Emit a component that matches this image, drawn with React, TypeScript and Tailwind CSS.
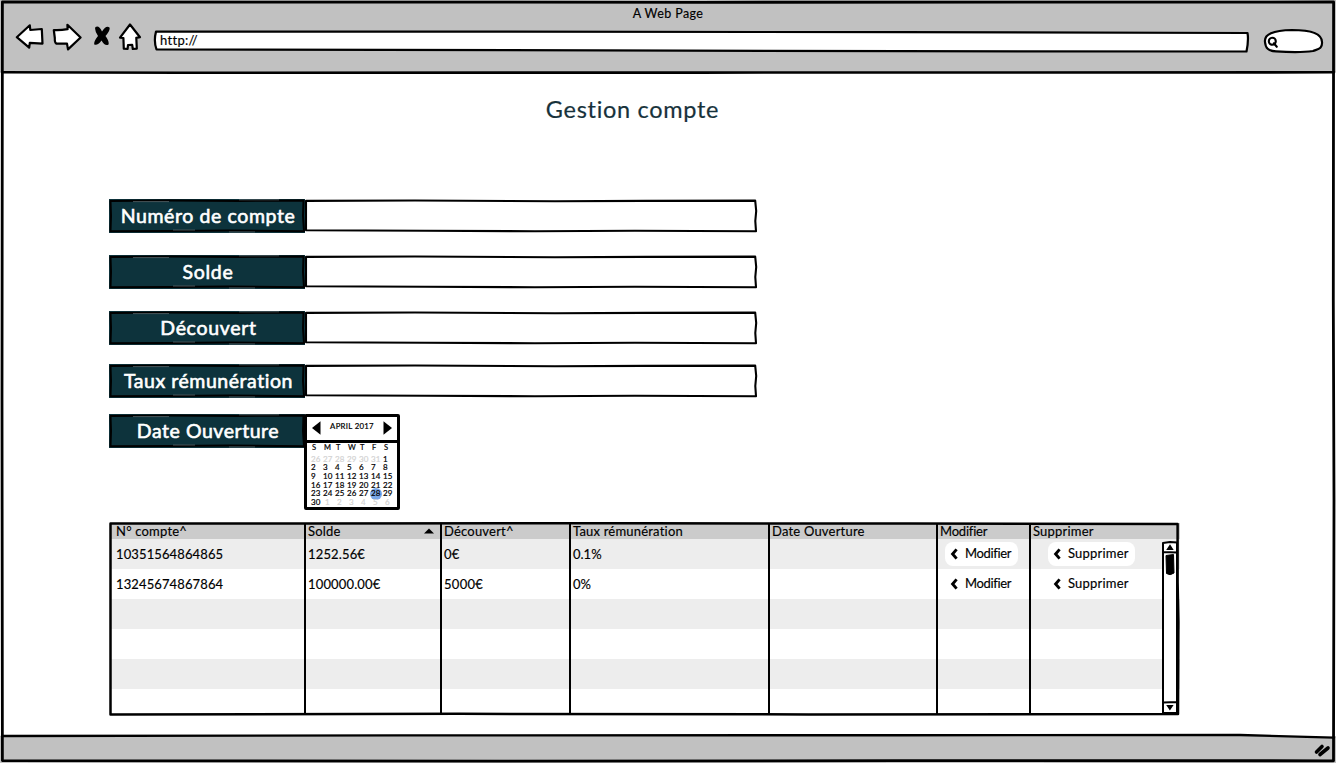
import type { ReactNode } from 'react';

const FIELDS = [
  { label: 'Numéro de compte', box: 'mb-[22px]', tracking: 'tracking-[0.6px]', nudge: 'pl-[2px]' },
  { label: 'Solde', box: 'mb-[22px]', tracking: 'tracking-[0.7px]', nudge: 'pl-[2px]' },
  { label: 'Découvert', box: 'mb-[19px]', tracking: 'tracking-[0.7px]', nudge: 'pl-[3px]' },
  { label: 'Taux rémunération', box: 'mb-[16px]', tracking: 'tracking-[0.55px]', nudge: 'pl-[3px]' },
];

const WEEKS = [
  [26, 27, 28, 29, 30, 31, 1],
  [2, 3, 4, 5, 6, 7, 8],
  [9, 10, 11, 12, 13, 14, 15],
  [16, 17, 18, 19, 20, 21, 22],
  [23, 24, 25, 26, 27, 28, 29],
  [30, 1, 2, 3, 4, 5, 6],
];

const ACCOUNTS = [
  { id: '10351564864865', solde: '1252.56€', decouvert: '0€', taux: '0.1%' },
  { id: '13245674867864', solde: '100000.00€', decouvert: '5000€', taux: '0%' },
];

const COLS = 'grid grid-cols-[195px_136px_129px_199px_168px_93px_148px]';

function Stroke({ d, w, fill = 'none' }: { d: string; w: number; fill?: string }) {
  return <path d={d} fill={fill} stroke="#000" strokeWidth={w} strokeLinejoin="round" strokeLinecap="round" />;
}

function Label({ children, className }: { children: ReactNode; className: string }) {
  return (
    <div className="relative h-[34px] w-[196px] shrink-0 bg-[#0d333c]">
      <svg className="absolute inset-0" width="196" height="34" viewBox="0 0 196 34">
        <Stroke w={2} d="M1.5 2 L60 1.4 L130 1.9 L194.5 1.5 L194 17 L195 32.3 L120 31.6 L60 32 L1.5 32.3 L2 17 Z" />
        <path d="M24 2.6H60M130 .8H170M64 31H86M120 33H146" stroke="#59666a" strokeWidth=".8" />
      </svg>
      <div className={`relative flex h-[34px] items-center justify-center whitespace-nowrap text-[19.5px] leading-none text-white [-webkit-text-stroke:0.6px_white] ${className}`}>
        {children}
      </div>
    </div>
  );
}

function TextBox() {
  return (
    <div className="relative h-[34px] w-[453px]">
      <svg className="absolute inset-0" width="453" height="34" viewBox="0 0 453 34">
        <Stroke w={2.1} d="M1 1.9 L110 1.5 L250 2.2 L340 1.9 L450.2 1.6 L451.2 12 L450.3 22 L451 32.2 L330 31.8 L230 32.2 L120 31.8 L1 31.2 Z" />
      </svg>
    </div>
  );
}

function Calendar() {
  return (
    <div className="relative h-[96px] w-[96px] -ml-px rounded-[2px] border-[3px] border-black bg-white text-[7.5px] leading-none text-black [-webkit-text-stroke:0.2px]">
      <div className="flex h-[26px] items-center justify-between border-b-[3px] border-black pl-[5px] pr-[5px]">
        <svg width="9" height="14" viewBox="0 0 9 14" className="-mt-[2px]"><path d="M0 7 8.5.3v13.4z" /></svg>
        <span className="-mt-[3px] whitespace-nowrap text-[7.8px] tracking-[0.3px]">APRIL 2017</span>
        <svg width="9" height="14" viewBox="0 0 9 14" className="-mt-[2px]"><path d="M9 7 .5.3v13.4z" /></svg>
      </div>
      <div className="grid h-[10px] grid-cols-[repeat(7,12px)] pl-[5px] pt-[1px]">
        {['S', 'M', 'T', 'W', 'T', 'F', 'S'].map((d, i) => (
          <span key={i}>{d}</span>
        ))}
      </div>
      <div className="flex flex-col pl-[4px] pt-[1.5px] text-[8px] tracking-[0.15px]">
        {WEEKS.map((week, r) => (
          <div key={r} className="grid h-[8.7px] grid-cols-[repeat(7,12px)]">
            {week.map((day, c) => {
              const faded = (r === 0 && c < 6) || (r === 5 && c > 0);
              const selected = r === 4 && c === 5;
              return (
                <span key={c} className={`relative leading-[8.7px] ${faded ? 'text-[#d3d3d3]' : ''} ${r === 5 && c > 0 ? 'pl-[2px]' : ''}`}>
                  {selected && <i className="absolute -left-[1px] -top-[1.5px] size-[12px] rounded-full bg-[#7aa7e8]" />}
                  <span className="relative">{day}</span>
                </span>
              );
            })}
          </div>
        ))}
      </div>
    </div>
  );
}

function LinkButton({ children, className }: { children: string; className: string }) {
  return (
    <button className={`flex h-[24px] items-center rounded-[8px] bg-white pb-px pl-[5px] text-[13px] leading-none ${className}`}>
      <svg width="8" height="12" viewBox="0 0 8 12" className="mr-[7px] mt-px">
        <path d="M6.600 1.400 2.600 6l4 4.600" fill="none" stroke="#000" strokeWidth="2.9" />
      </svg>
      {children}
    </button>
  );
}

function Scrollbar() {
  return (
    <svg className="absolute right-px top-[19px]" width="17" height="174" viewBox="0 0 17 174">
      <rect x="1" y="1" width="15" height="172" fill="#fff" />
      <Stroke w={2} d="M1 2 L8 1 L15 1.5 V172 H1 Z M1.5 11 L14.5 11.6 M1.5 161.5 L14.5 161" />
      <path d="M4.2 9 8 3.2l3.7 5.8zM4.2 164h7.4l-3.7 5.4z" />
      <path d="M4 14.5 L11.500 13.5 L12 32 Q8 35 4.500 32.5Z" stroke="#000" strokeWidth="1" />
    </svg>
  );
}

function AccountTable() {
  return (
    <div className="relative h-[194px] w-[1071px] text-[13px] leading-none text-black [-webkit-text-stroke:0.15px]">
      <div className="flex h-[193px] flex-col overflow-hidden pl-px pt-px">
        <div className={`${COLS} h-[16px] shrink-0 items-center bg-[#cbcbcb] tracking-[0.2px] [&>span]:pl-[3px]`}>
          <span className="!pl-[6px]">N° compte^</span>
          <span className="flex items-center justify-between pr-[7px]">
            Solde
            <svg width="10" height="6" viewBox="0 0 10 6"><path d="M0 5.5 5 .5l5 5z" /></svg>
          </span>
          <span>Découvert^</span>
          <span>Taux rémunération</span>
          <span>Date Ouverture</span>
          <span className="tracking-[-0.2px]">Modifier</span>
          <span className="tracking-[0.2px]">Supprimer</span>
        </div>
        {ACCOUNTS.map((a) => (
          <div key={a.id} className={`${COLS} h-[30px] shrink-0 items-center odd:bg-white even:bg-[#ededed] [&>span]:pl-[3px] [&>span]:pt-px`}>
            <span className="!pl-[6px] tracking-[0.12px]">{a.id}</span>
            <span className="tracking-[0.15px]">{a.solde}</span>
            <span className="tracking-[0.3px]">{a.decouvert}</span>
            <span>{a.taux}</span>
            <span />
            <LinkButton className="ml-[8px] w-[73px] tracking-[-0.35px]">Modifier</LinkButton>
            <LinkButton className="ml-[18px] w-[87px] tracking-[0.2px]">Supprimer</LinkButton>
          </div>
        ))}
        {[0, 1, 2, 3].map((r) => (
          <div key={r} className="h-[30px] shrink-0 odd:bg-white even:bg-[#ededed]" />
        ))}
      </div>
      <Scrollbar />
      <svg className="absolute inset-0" width="1071" height="194" viewBox="0 0 1071 194">
        <Stroke w={2.5} d="M1.5 1.5 L200 1.5 L500 1.2 L800 1.6 L1068.6 2 L1068.6 60 L1069.4 100 L1069 192 L700 192.4 L350 191.8 L1.5 192.4 L1.500 90 Z" />
        <Stroke w={2} d="M196 2V192M332 2V192M461 2V192M660 2V192M828 2V192M921 2V192" />
      </svg>
    </div>
  );
}

export default function App() {
  return (
    <div className="relative flex h-[763px] w-[1336px] flex-col overflow-hidden bg-white font-['Lato',sans-serif] text-black">
      <header className="h-[72px] shrink-0 bg-[#c1c1c1] [-webkit-text-stroke:0.15px]">
        <div className="h-[22px] pt-[7px] text-center text-[12.5px] leading-[14px] tracking-[0.4px]">A Web Page</div>
        <div className="flex h-[32px] pl-[14px]">
          <svg width="32" height="32" viewBox="14 22 32 32" className="mr-[4px]">
            <Stroke w={2.2} fill="#fff" d="M16.8 37.2 L29.8 25.3 L30.3 30 L41.8 29 L42.5 43.6 L29.8 42.8 L29.2 47.6 Z" />
          </svg>
          <svg width="34" height="32" viewBox="50 22 34 32" className="mr-[10px]">
            <Stroke w={2.2} fill="#fff" d="M53.8 30 Q60 30.4 67.6 29.2 L67.4 24.8 L80.6 37.5 L68 49.4 L67 43.6 L56.5 43.6 Q54.6 43 54.8 38 Z" />
          </svg>
          <svg width="17" height="32" viewBox="94 22 17 32" className="mr-[6px]">
            <path d="M95.500 27 Q99 25 102 31.500 Q106 25 109.500 27.500 Q110.500 30 105.500 36 Q109.500 41.500 108.500 44.500 Q105 46.500 101.5 40.500 Q97.500 46 94.3 44.500 Q93.500 41.500 98 36 Q94 30 95.500 27 Z" />
          </svg>
          <svg width="26" height="32" viewBox="117 22 26 32" className="mr-[10px]">
            <Stroke w={2.2} fill="#fff" d="M130 24.5 L140 37.2 L136.3 37.8 L136.8 48.6 L132.8 49 L132.2 44.8 L128 45 L127.6 49 L123.8 48.6 L123.4 38 L120 37.6 Z" />
          </svg>
          <div className="relative mr-[12px] w-[1097px]">
            <svg className="absolute inset-0" width="1097" height="32" viewBox="153 22 1097 32">
              <Stroke w={2.2} fill="#fff" d="M156 31.6 L500 31.6 L900 32.2 L1247.5 33 Q1248.8 40 1246.5 51.5 L900 51.2 L600 50.4 L156.5 49.4 Q153.5 41 156 31.6 Z" />
            </svg>
            <span className="relative block pl-[7px] pt-[11px] text-[13px] leading-[14px] tracking-[0.3px]">http://</span>
          </div>
          <svg width="63" height="32" viewBox="1262 22 63 32">
            <Stroke w={2.2} fill="#fff" d="M1265 42 C1264 34 1273 30.5 1292 30 C1309 30 1322 33 1322 42 C1322.5 49 1318 49 1313 51 Q1300 53 1276 51.4 C1268 51 1265.5 48 1265 42 Z" />
            <circle cx="1272.3" cy="41.2" r="3.5" fill="none" stroke="#000" strokeWidth="2.1" />
            <path d="M1273.8 43.3 L1276.8 46.8" stroke="#000" strokeWidth="2.1" strokeLinecap="round" />
          </svg>
        </div>
      </header>

      <main className="flex h-[664px] shrink-0 flex-col pl-[109px]">
        <h1 className="mb-[75px] mt-[22px] w-[1047px] text-center text-[23.5px] leading-[30px] tracking-[0.7px] text-[#17323b] [-webkit-text-stroke:0.2px]">Gestion compte</h1>
        {FIELDS.map((f) => (
          <div key={f.label} className={`flex ${f.box}`}>
            <Label className={`${f.tracking} ${f.nudge}`}>{f.label}</Label>
            <TextBox />
          </div>
        ))}
        <div className="mb-[12px] flex items-start">
          <Label className="pl-[2px] tracking-[0.55px]">Date Ouverture</Label>
          <Calendar />
        </div>
        <AccountTable />
      </main>

      <footer className="h-[27px] shrink-0 bg-[#c1c1c1]" />

      <svg className="pointer-events-none absolute inset-0" width="1336" height="763" viewBox="0 0 1336 763">
        <path d="M1100 733 H1334 V737.5 Z" fill="#fff" />
        <Stroke w={2.8} d="M2.4 2 L700 2.3 L1333.6 2 L1333.3 300 L1334 500 L1333.5 760.8 L900 760.6 L500 761.2 L2.4 760.6 L2 400 Z" />
        <Stroke w={2.6} d="M2 72.2 L180 72.8 L700 72.6 L1334 72.3" />
        <Stroke w={2.4} d="M2 736 L400 735.4 L900 735.2 L1240 735 L1334 737.6" />
        <path d="M1316.5 752 L1322 746.5 M1320 754.5 L1328 748" stroke="#000" strokeWidth="3.6" strokeLinecap="round" />
      </svg>
    </div>
  );
}
